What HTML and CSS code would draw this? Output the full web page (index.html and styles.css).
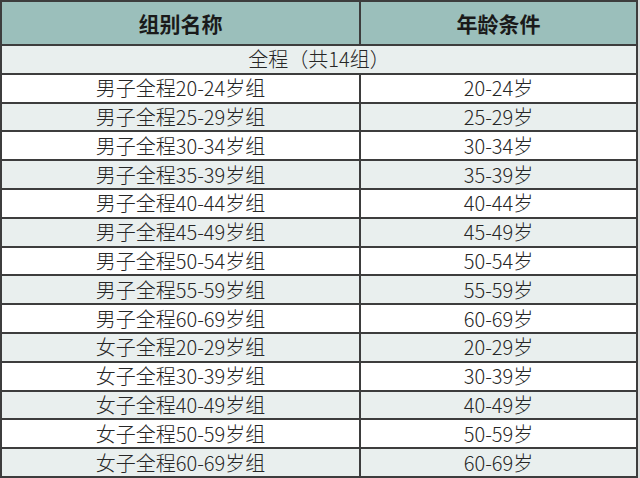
FILE: index.html
```html
<!DOCTYPE html>
<html lang="zh">
<head>
<meta charset="utf-8">
<title>组别</title>
<link rel="stylesheet" href="styles.css">
</head>
<body>
<div class="page">
  <div class="table">
    <div class="cell head">组别名称</div>
    <div class="cell head">年龄条件</div>
    <div class="cell span alt">全程（共14组）</div>

    <div class="cell">男子全程20-24岁组</div><div class="cell">20-24岁</div>
    <div class="cell alt">男子全程25-29岁组</div><div class="cell alt">25-29岁</div>
    <div class="cell">男子全程30-34岁组</div><div class="cell">30-34岁</div>
    <div class="cell alt">男子全程35-39岁组</div><div class="cell alt">35-39岁</div>
    <div class="cell">男子全程40-44岁组</div><div class="cell">40-44岁</div>
    <div class="cell alt">男子全程45-49岁组</div><div class="cell alt">45-49岁</div>
    <div class="cell">男子全程50-54岁组</div><div class="cell">50-54岁</div>
    <div class="cell alt">男子全程55-59岁组</div><div class="cell alt">55-59岁</div>
    <div class="cell">男子全程60-69岁组</div><div class="cell">60-69岁</div>
    <div class="cell alt">女子全程20-29岁组</div><div class="cell alt">20-29岁</div>
    <div class="cell">女子全程30-39岁组</div><div class="cell">30-39岁</div>
    <div class="cell alt">女子全程40-49岁组</div><div class="cell alt">40-49岁</div>
    <div class="cell">女子全程50-59岁组</div><div class="cell">50-59岁</div>
    <div class="cell alt">女子全程60-69岁组</div><div class="cell alt">60-69岁</div>
  </div>
</div>
</body>
</html>
```

FILE: styles.css
```css
html, body {
  margin: 0;
  padding: 0;
  background: #ffffff;
}
.page {
  width: 640px;
  height: 478px;
  overflow: hidden;
  background: #ffffff;
}
.table {
  display: grid;
  width: 634px;
  grid-template-columns: 357px 275px;
  grid-template-rows: 42px repeat(15, 26.8px);
  gap: 2px;
  padding: 2px;
  background: #3d3d3d;
  box-shadow: 2px 0 0 #dcdcdc;
  font-family: "Noto Sans CJK SC", "Noto Sans", sans-serif;
  font-size: 20px;
  font-weight: 300;
  color: #262626;
}
.cell {
  display: flex;
  align-items: center;
  justify-content: center;
  background: #ffffff;
  line-height: 1;
  white-space: nowrap;
}
.cell.alt {
  background: #e9efee;
}
.cell.head {
  background: #9bbfbb;
  font-weight: bold;
  font-size: 21px;
  color: #1a1a1a;
}
.cell.span {
  grid-column: 1 / 3;
}
```
